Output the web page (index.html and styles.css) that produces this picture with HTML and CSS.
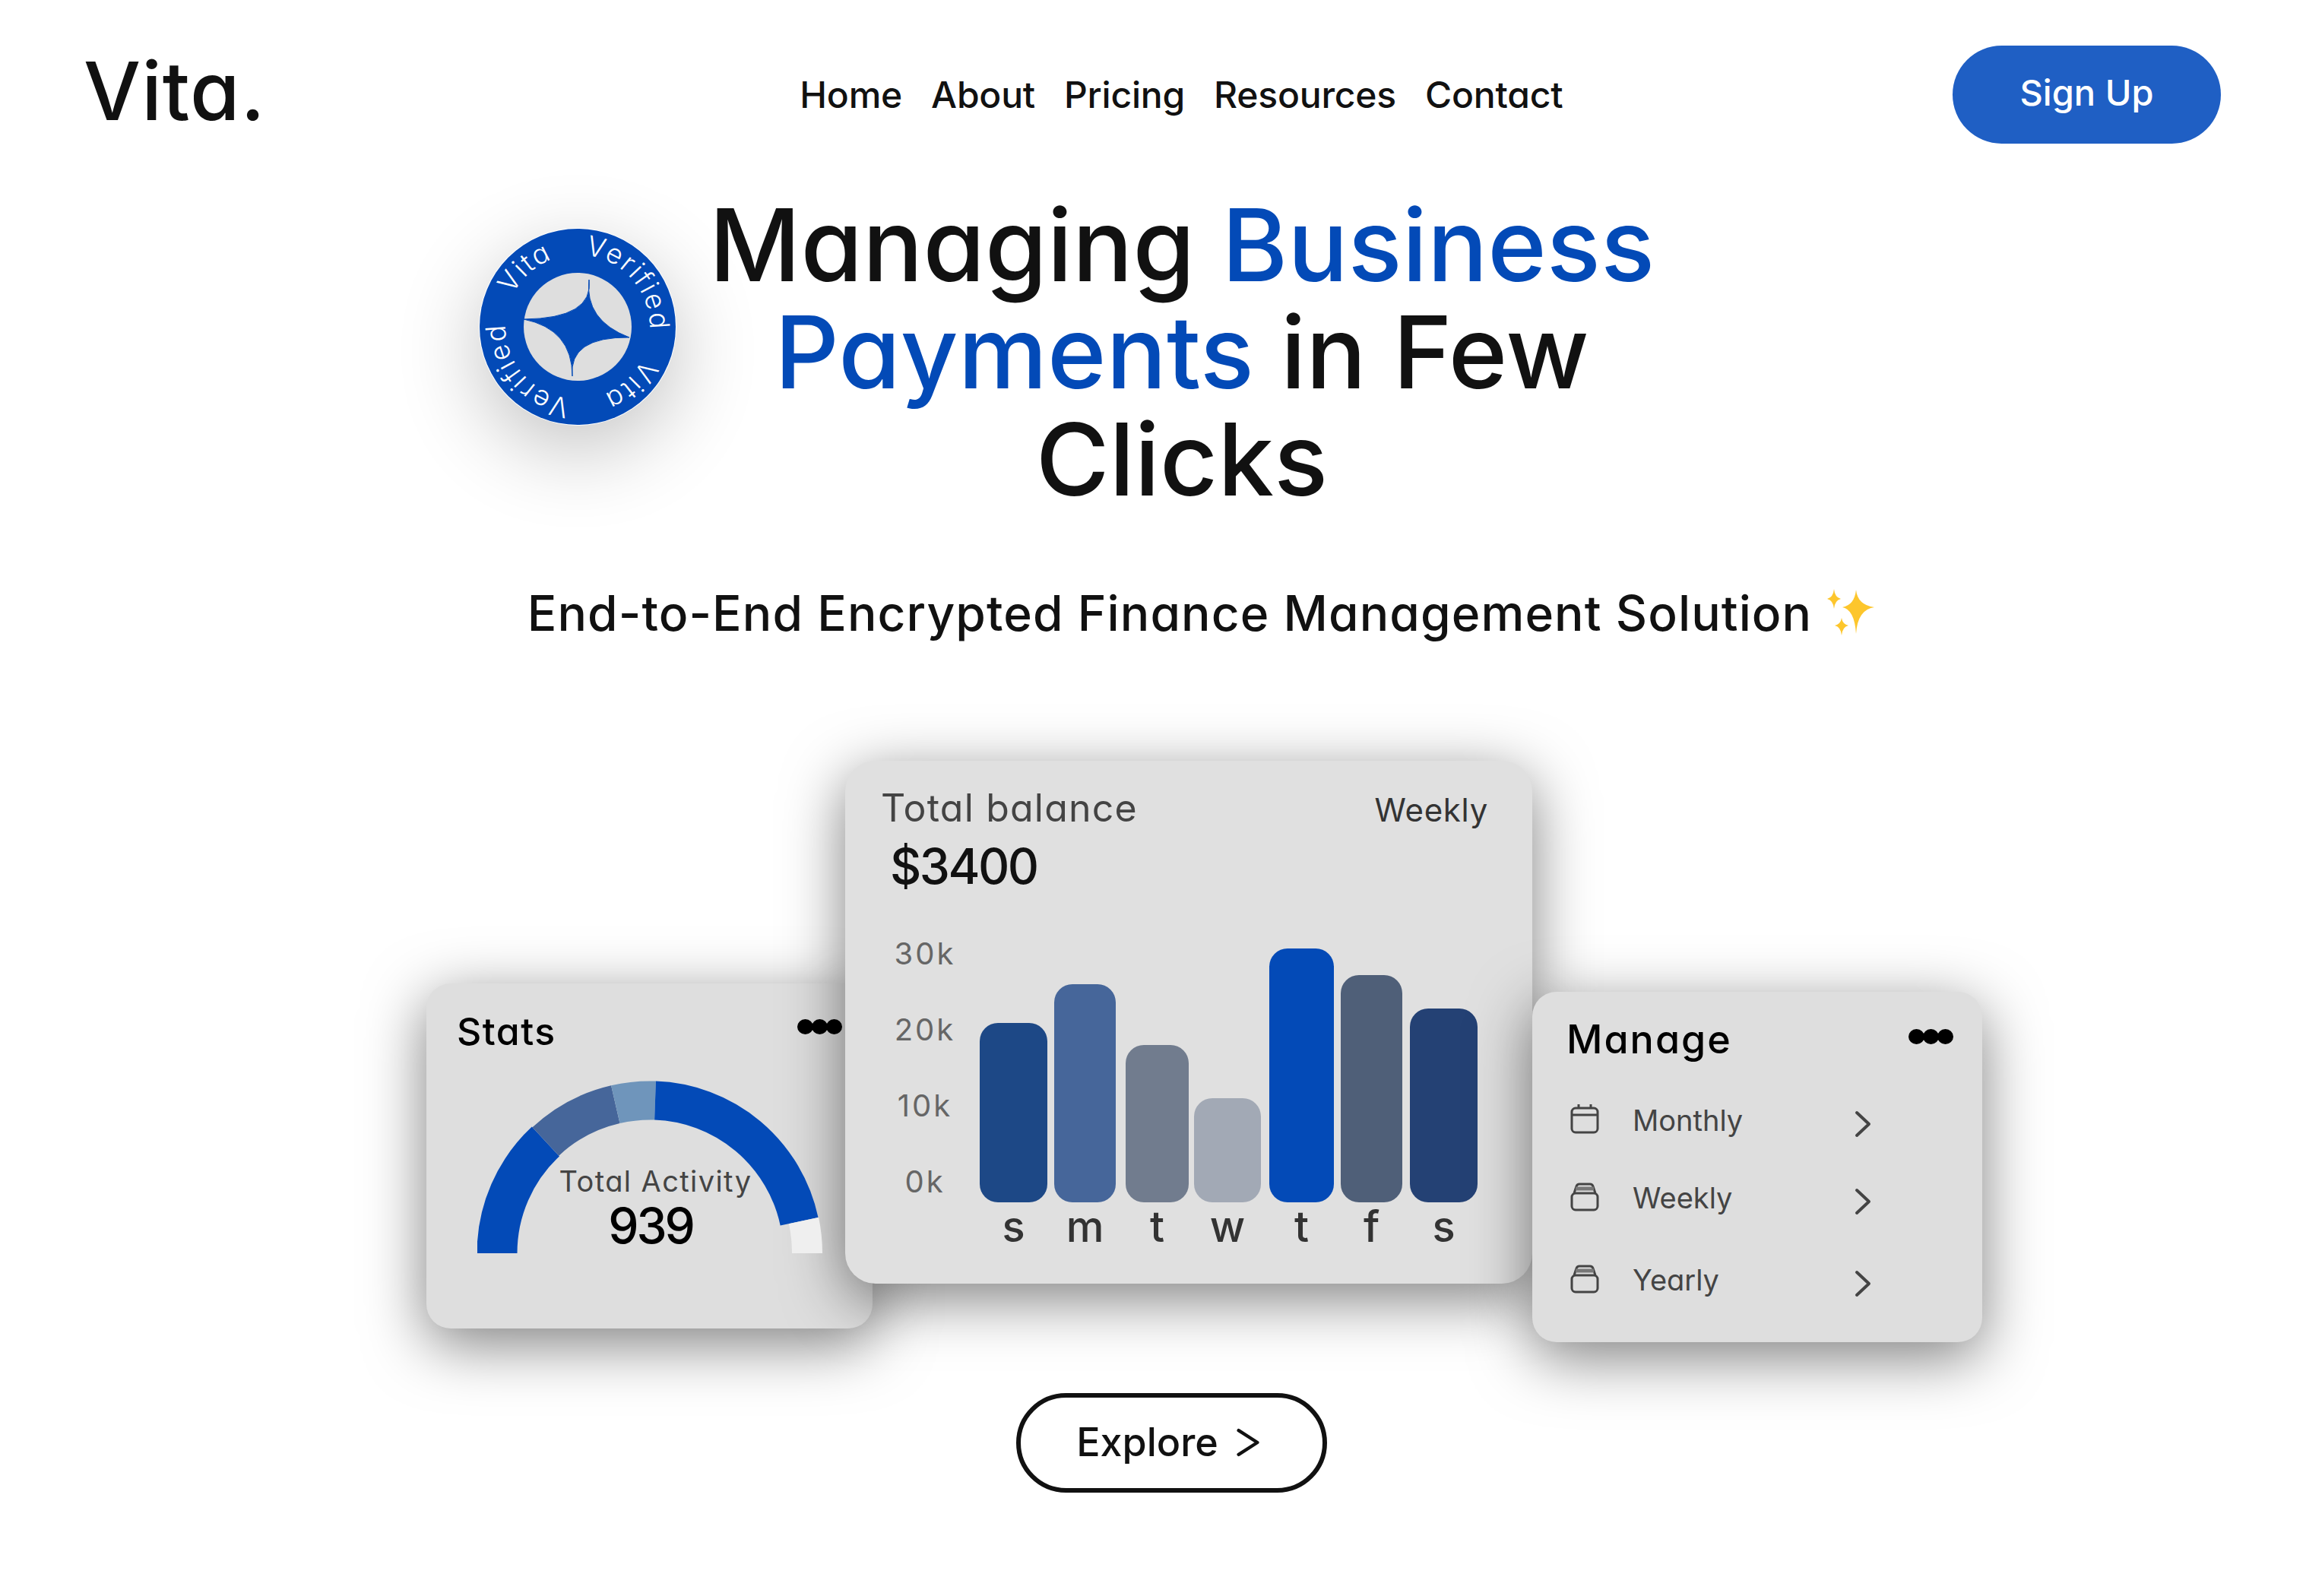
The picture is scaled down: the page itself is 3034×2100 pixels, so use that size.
FILE: index.html
```html
<!DOCTYPE html>
<html lang="en">
<head>
<meta charset="utf-8">
<title>Vita</title>
<link rel="stylesheet" href="styles.css">
</head>
<body>
<header class="topbar">
  <div class="logo">Vita.</div>
  <nav class="nav">
    <a>Home</a><a>About</a><a>Pricing</a><a>Resources</a><a>Contact</a>
  </nav>
  <a class="signup">Sign Up</a>
</header>

<main>
<section class="hero">
  <div class="badge">
    <svg viewBox="0 0 260 260" width="260" height="260">
      <circle cx="130" cy="130" r="129" fill="#034ab7"/>
      <circle cx="130" cy="130" r="71" fill="#dedede"/>
      <path d="M145 68Q139 121.5 198 144Q118 143 123 195Q123 133 59 120Q151.5 119 145 68Z" fill="#034ab7" stroke="#034ab7" stroke-width="1"/>
      <defs><path id="ring" d="M130 35A95 95 0 1 1 129.99 35"/></defs>
      <text class="badge-text"><textPath href="#ring" startOffset="10">Verified</textPath></text>
      <text class="badge-text"><textPath href="#ring" startOffset="192">Vita</textPath></text>
      <text class="badge-text"><textPath href="#ring" startOffset="308">Verified</textPath></text>
      <text class="badge-text"><textPath href="#ring" startOffset="491">Vita</textPath></text>
    </svg>
  </div>
  <h1 class="title">Managing <span class="accent">Business</span><br><span class="accent">Payments</span> in Few<br>Clicks</h1>
  <p class="subtitle">End-to-End Encrypted Finance Management Solution
    <svg class="sparkle" viewBox="0 0 64 64" width="64" height="64">
      <path d="M38 4Q40 24 62 27Q40 30 38 62Q36 30 20 27Q36 24 38 4Z" fill="#fdc62c"/>
      <path d="M9 3Q10 14 18 16Q10 18 9 29Q8 18 0 16Q8 14 9 3Z" fill="#fdc62c"/>
      <path d="M19 41Q20 49 28 51Q20 53 19 64Q18 53 10 51Q18 49 19 41Z" fill="#fdc62c"/>
    </svg>
  </p>
</section>

<section class="dash">
  <article class="card stats">
    <div class="card-head">
      <h2 class="stats-title">Stats</h2>
      <div class="dots"><i></i><i></i><i></i></div>
    </div>
    <div class="gauge">
      <svg viewBox="0 0 456 230" width="456" height="230" fill="none">
        <path d="M26 228A201 201 0 0 1 89.9 81" stroke="#034ab7" stroke-width="53"/>
        <path d="M89.9 81A201 201 0 0 1 181.8 32.2" stroke="#46669a" stroke-width="51"/>
        <path d="M181.8 32.2A201 201 0 0 1 234 27.1" stroke="#6f95bb" stroke-width="51"/>
        <path d="M234 27.1A201 201 0 0 1 423.6 186.2" stroke="#034ab7" stroke-width="51"/>
        <path d="M429.5 185A207 207 0 0 1 434 228" stroke="#efefef" stroke-width="40"/>
      </svg>
      <div class="gauge-label">Total Activity</div>
      <div class="gauge-value">939</div>
    </div>
  </article>

  <article class="card balance">
    <div class="balance-head">
      <h2 class="balance-title">Total balance</h2>
      <span class="balance-period">Weekly</span>
    </div>
    <div class="balance-amount">$3400</div>
    <div class="chart">
      <div class="axis"><span>30k</span><span>20k</span><span>10k</span><span>0k</span></div>
      <div class="plot">
        <div class="day"><div class="bar c1" style="width:89px;height:236px"></div><span>s</span></div>
        <div class="day"><div class="bar c2" style="width:81px;height:287px"></div><span>m</span></div>
        <div class="day"><div class="bar c3" style="width:83px;height:207px"></div><span>t</span></div>
        <div class="day"><div class="bar c4" style="width:88px;height:137px"></div><span>w</span></div>
        <div class="day"><div class="bar c5" style="width:85px;height:334px"></div><span>t</span></div>
        <div class="day"><div class="bar c6" style="width:81px;height:299px"></div><span>f</span></div>
        <div class="day"><div class="bar c7" style="width:89px;height:255px"></div><span>s</span></div>
      </div>
    </div>
  </article>

  <article class="card manage">
    <div class="card-head manage-head">
      <h2 class="manage-title">Manage</h2>
      <div class="dots"><i></i><i></i><i></i></div>
    </div>
    <ul class="rows">
      <li class="row">
        <svg class="row-icon" viewBox="0 0 38 40" width="38" height="40" fill="none" stroke="#444" stroke-width="3"><rect x="2" y="6" width="34" height="32" rx="5"/><path d="M2 15H36M11 1V6M27 1V6"/></svg>
        <span class="row-label">Monthly</span>
        <svg class="row-chev" viewBox="0 0 22 36" width="22" height="36" fill="none" stroke="#444" stroke-width="4" stroke-linecap="round" stroke-linejoin="round"><path d="M3 3L19 18L3 33"/></svg>
      </li>
      <li class="row">
        <svg class="row-icon" viewBox="0 0 38 40" width="38" height="40" fill="none" stroke="#444" stroke-width="3"><rect x="2" y="16" width="34" height="22" rx="5"/><path d="M5 16L8 7Q9 4 12 4H26Q29 4 30 7L33 16"/><path d="M7 10H31" stroke="#777" stroke-width="5"/></svg>
        <span class="row-label">Weekly</span>
        <svg class="row-chev" viewBox="0 0 22 36" width="22" height="36" fill="none" stroke="#444" stroke-width="4" stroke-linecap="round" stroke-linejoin="round"><path d="M3 3L19 18L3 33"/></svg>
      </li>
      <li class="row">
        <svg class="row-icon" viewBox="0 0 38 40" width="38" height="40" fill="none" stroke="#444" stroke-width="3"><rect x="2" y="16" width="34" height="22" rx="5"/><path d="M5 16L8 7Q9 4 12 4H26Q29 4 30 7L33 16"/><path d="M7 10H31" stroke="#777" stroke-width="5"/></svg>
        <span class="row-label">Yearly</span>
        <svg class="row-chev" viewBox="0 0 22 36" width="22" height="36" fill="none" stroke="#444" stroke-width="4" stroke-linecap="round" stroke-linejoin="round"><path d="M3 3L19 18L3 33"/></svg>
      </li>
    </ul>
  </article>
</section>

<div class="cta">
  <a class="explore">Explore
    <svg viewBox="0 0 34 42" width="30" height="40" fill="none" stroke="#111" stroke-width="5" stroke-linecap="round" stroke-linejoin="round"><path d="M3 3L31 21L3 39"/></svg>
  </a>
</div>
</main>
</body>
</html>
```

FILE: styles.css
```css
* { box-sizing: border-box; }
html, body { margin: 0; padding: 0; background: #fff; }
body {
  width: 3034px;
  height: 2100px;
  overflow: hidden;
  font-family: "Inter", "Liberation Sans", sans-serif;
  font-feature-settings: "cv11" 1;
  color: #111;
}
h1, h2, p, ul { margin: 0; padding: 0; font-weight: 400; }
li { list-style: none; }

/* header */
.topbar {
  display: flex;
  align-items: center;
  justify-content: space-between;
  padding: 60px 112px 0 110px;
}
.logo { font-size: 106px; line-height: 119px; letter-spacing: 1px; font-weight: 500; margin-bottom: 10px; }
.nav { display: flex; gap: 38px; font-size: 48px; line-height: 60px; margin-left: 190px; font-weight: 500; letter-spacing: -.2px; }
.signup {
  width: 353px;
  height: 129px;
  border-radius: 65px;
  background: #1f5fc4;
  color: #fff;
  font-size: 47px;
  font-weight: 500;
  display: flex;
  align-items: center;
  justify-content: center;
  padding-bottom: 6px;
}

/* hero */
.hero { position: relative; text-align: center; }
.badge {
  position: absolute;
  left: 630px;
  top: 111px;
  width: 260px;
  height: 260px;
  border-radius: 50%;
  box-shadow: 0 32px 110px rgba(0,0,0,.24);
}
.badge svg { display: block; }
.badge-text { font-size: 36px; fill: #fff; font-weight: 300; letter-spacing: 2px; }
.title {
  font-size: 132px;
  line-height: 141px;
  font-weight: 500;
  padding-left: 76px;
  padding-top: 63px;
}
.accent { color: #034ab7; }
.subtitle {
  font-size: 64px;
  line-height: 80px;
  font-weight: 500;
  letter-spacing: 1.1px;
  padding-left: 128px;
  margin-top: 92px;
  display: flex;
  justify-content: center;
  align-items: center;
  gap: 20px;
}
.sparkle { margin-top: -6px; }

/* dashboard */
.dash {
  display: flex;
  align-items: flex-start;
  padding-left: 561px;
  margin-top: 154px;
}
.card { background: #dedede; box-shadow: 0 20px 80px rgba(0,0,0,.5); }
.card-head { display: flex; justify-content: space-between; align-items: flex-start; }
.dots { display: flex; }
.dots i { width: 21px; height: 20px; border-radius: 50%; background: #000; margin-left: -2px; }

.stats {
  width: 587px;
  height: 454px;
  margin-top: 293px;
  border-radius: 32px;
  padding: 33px 40px 0 40px;
}
.stats-title { font-size: 50px; line-height: 60px; color: #000; font-weight: 500; letter-spacing: 1.5px; }
.stats .dots { margin-top: 14px; }
.gauge { position: relative; margin: 34px 0 0 27px; width: 456px; height: 230px; }
.gauge svg { display: block; }
.gauge-label {
  position: absolute;
  left: 0;
  right: -13px;
  top: 110px;
  text-align: center;
  font-size: 38px;
  line-height: 46px;
  letter-spacing: 1.4px;
  color: #444;
}
.gauge-value {
  position: absolute;
  left: 0;
  right: 0;
  top: 153px;
  text-align: center;
  font-size: 64px;
  line-height: 78px;
  font-weight: 500;
  letter-spacing: -3px;
  color: #000;
}

.balance {
  width: 904px;
  height: 688px;
  margin-left: -36px;
  border-radius: 40px;
  padding: 33px 58px 0 47px;
  background: #e0e0e0;
}
.balance-head { display: flex; justify-content: space-between; align-items: baseline; }
.balance-title { font-size: 50px; line-height: 58px; color: #444; letter-spacing: 1.2px; }
.balance-period { font-size: 42px; color: #333; letter-spacing: .7px; }
.balance-amount { font-size: 64px; line-height: 78px; font-weight: 500; letter-spacing: -2.5px; margin: 9px 0 0 12px; }
.chart { display: flex; margin-top: 26px; margin-left: 17px; }
.axis { width: 82px; display: flex; flex-direction: column; align-items: center; margin-right: 31px; }
.axis span { height: 100px; line-height: 100px; font-size: 40px; color: #666; letter-spacing: 3px; }
.plot {
  display: grid;
  grid-template-columns: 98px 94px 90px 99px 94px 91px 89px;
  height: 439px;
  align-items: end;
  justify-items: start;
}
.day { display: flex; flex-direction: column; align-items: center; height: 439px; justify-content: flex-end; }
.day span { font-size: 56px; line-height: 60px; margin-top: 2px; color: #333; font-weight: 500; }
.bar { border-radius: 24px; }
.c1 { background: #1d4886; }
.c2 { background: #46669a; }
.c3 { background: #717c8e; }
.c4 { background: #a2a9b5; }
.c5 { background: #034ab7; }
.c6 { background: #4f5f78; }
.c7 { background: #244174; }

.manage {
  width: 592px;
  height: 461px;
  margin-top: 304px;
  border-radius: 32px;
  padding: 32px 38px 0 45px;
}
.manage-title { font-size: 52px; line-height: 62px; color: #000; font-weight: 500; letter-spacing: 2px; }
.manage .dots { margin-top: 17px; }
.rows { display: grid; grid-template-rows: 102px 108px 48px; margin-top: 51px; }
.row { display: flex; align-items: flex-start; height: 48px; color: #444; font-size: 38px; line-height: 48px; }
.row-icon { margin: 2px 0 0 5px; flex: none; }
.row-label { width: 292px; margin-left: 44px; }
.row-chev { flex: none; margin-top: 11px; }

/* cta */
.cta { display: flex; justify-content: center; padding-left: 49px; margin-top: 67px; }
.explore {
  width: 409px;
  height: 131px;
  border: 6px solid #111;
  border-radius: 66px;
  display: flex;
  align-items: center;
  justify-content: center;
  gap: 24px;
  font-size: 52px;
  font-weight: 500;
  padding: 0 10px 2px 0;
}
```
